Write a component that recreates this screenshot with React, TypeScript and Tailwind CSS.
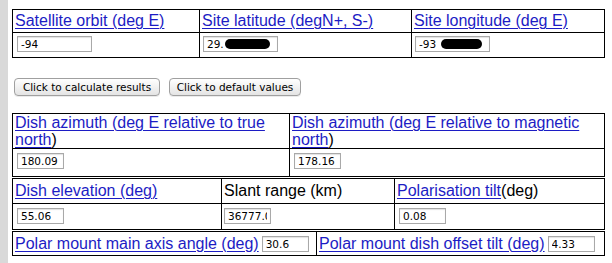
import React from 'react';

const link = 'text-[#1c1cc4] underline underline-offset-[2px] decoration-1';
const cell = 'border border-black px-[2px]';

const Field: React.FC<{ value: string; w?: string; mask?: string }> = ({ value, w = 'w-[47px]', mask }) => (
  <div className={`relative shrink-0 h-[16px] ${w}`}>
    <input
      readOnly
      value={value}
      className={`block ${w} h-[16px] px-[3px] border border-[#a9a9a9] bg-white text-[10.5px] leading-[14px] text-black shadow-[inset_0_1px_1px_rgba(0,0,0,0.12)] font-['DejaVu_Sans',sans-serif] outline-none`}
    />
    {mask && <span className={`absolute top-[3px] h-[10px] rounded-full bg-black ${mask}`} />}
  </div>
);

const Btn: React.FC<{ label: string; w: string }> = ({ label, w }) => (
  <button
    className={`${w} h-[18px] rounded-[4px] border border-[#a0a0a0] bg-gradient-to-b from-white to-[#e4e4e4] text-[10.5px] leading-[16px] text-black font-['DejaVu_Sans',sans-serif] shadow-[0_1px_0_rgba(0,0,0,0.08)]`}
  >
    {label}
  </button>
);

const InputCell: React.FC<{ children: React.ReactNode; pl?: string; pt?: string }> = ({ children, pl = 'pl-[4px]', pt = 'pt-[3px]' }) => (
  <td className={`${cell} align-top ${pl} ${pt} leading-none`}>{children}</td>
);

export default function App() {
  return (
    <div className="flex w-[612px] h-[263px] bg-white overflow-hidden font-['Liberation_Sans',Arial,sans-serif] text-[16px] text-black">
      <div className="w-[8px] shrink-0 bg-[#d9d9d9]" />
      <div className="pl-[4px] pt-[9px]">
        {/* site inputs */}
        <table className="border-collapse w-[592px] table-fixed">
          <colgroup>
            <col className="w-[187px]" />
            <col className="w-[212px]" />
            <col className="w-[193px]" />
          </colgroup>
          <tbody>
            <tr className="h-[23px]">
              <td className={`${cell} align-middle leading-[18px]`}><a className={link}>Satellite orbit (deg E)</a></td>
              <td className={`${cell} align-middle leading-[18px]`}><a className={link}>Site latitude (degN+, S-)</a></td>
              <td className={`${cell} align-middle leading-[18px]`}><a className={link}>Site longitude (deg E)</a></td>
            </tr>
            <tr className="h-[25px]">
              <InputCell><Field value="-94" w="w-[75px]" /></InputCell>
              <InputCell pl="pl-[3px]"><Field value="29." w="w-[75px]" mask="left-[22px] w-[45px]" /></InputCell>
              <InputCell pl="pl-[3px]"><Field value="-93" w="w-[75px]" mask="left-[26px] w-[41px]" /></InputCell>
            </tr>
          </tbody>
        </table>

        <div className="flex gap-[9px] pl-[2px] pt-[20px] pb-[17px]">
          <Btn label="Click to calculate results" w="w-[146px]" />
          <Btn label="Click to default values" w="w-[132px]" />
        </div>

        {/* dish azimuth */}
        <table className="border-collapse w-[592px] table-fixed">
          <colgroup>
            <col className="w-[277px]" />
            <col className="w-[315px]" />
          </colgroup>
          <tbody>
            <tr className="h-[35px]">
              <td className={`${cell} align-top leading-[17px] pt-0`}><a className={link}>Dish azimuth (deg E relative to true north</a>)</td>
              <td className={`${cell} align-top leading-[17px] pt-0`}><a className={link}>Dish azimuth (deg E relative to magnetic north</a>)</td>
            </tr>
            <tr className="h-[28px]">
              <InputCell pt="pt-[4px]"><Field value="180.09" /></InputCell>
              <InputCell pt="pt-[4px]"><Field value="178.16" /></InputCell>
            </tr>
          </tbody>
        </table>

        {/* elevation / slant / polarisation */}
        <table className="border-collapse w-[592px] table-fixed mt-[1px]">
          <colgroup>
            <col className="w-[209px]" />
            <col className="w-[173px]" />
            <col className="w-[210px]" />
          </colgroup>
          <tbody>
            <tr className="h-[25px]">
              <td className={`${cell} align-middle leading-[18px]`}><a className={link}>Dish elevation (deg)</a></td>
              <td className={`${cell} align-middle leading-[18px]`}>Slant range (km)</td>
              <td className={`${cell} align-middle leading-[18px]`}><a className={link}>Polarisation tilt</a>(deg)</td>
            </tr>
            <tr className="h-[26px]">
              <InputCell pt="pt-[4px]"><Field value="55.06" /></InputCell>
              <InputCell pl="pl-[2px]" pt="pt-[4px]"><Field value="36777.06" /></InputCell>
              <InputCell pt="pt-[4px]"><Field value="0.08" /></InputCell>
            </tr>
          </tbody>
        </table>

        {/* polar mount */}
        <table className="border-collapse w-[592px] table-fixed mt-[1px]">
          <colgroup>
            <col className="w-[304px]" />
            <col className="w-[288px]" />
          </colgroup>
          <tbody>
            <tr className="h-[24px]">
              <td className={`${cell} align-middle leading-[18px]`}>
                <div className="flex items-center gap-[3px] whitespace-nowrap">
                  <a className={link}>Polar mount main axis angle (deg)</a>
                  <Field value="30.6" />
                </div>
              </td>
              <td className={`${cell} align-middle leading-[18px]`}>
                <div className="flex items-center gap-[3px] whitespace-nowrap">
                  <a className={link}>Polar mount dish offset tilt (deg)</a>
                  <Field value="4.33" />
                </div>
              </td>
            </tr>
          </tbody>
        </table>
      </div>
    </div>
  );
}
